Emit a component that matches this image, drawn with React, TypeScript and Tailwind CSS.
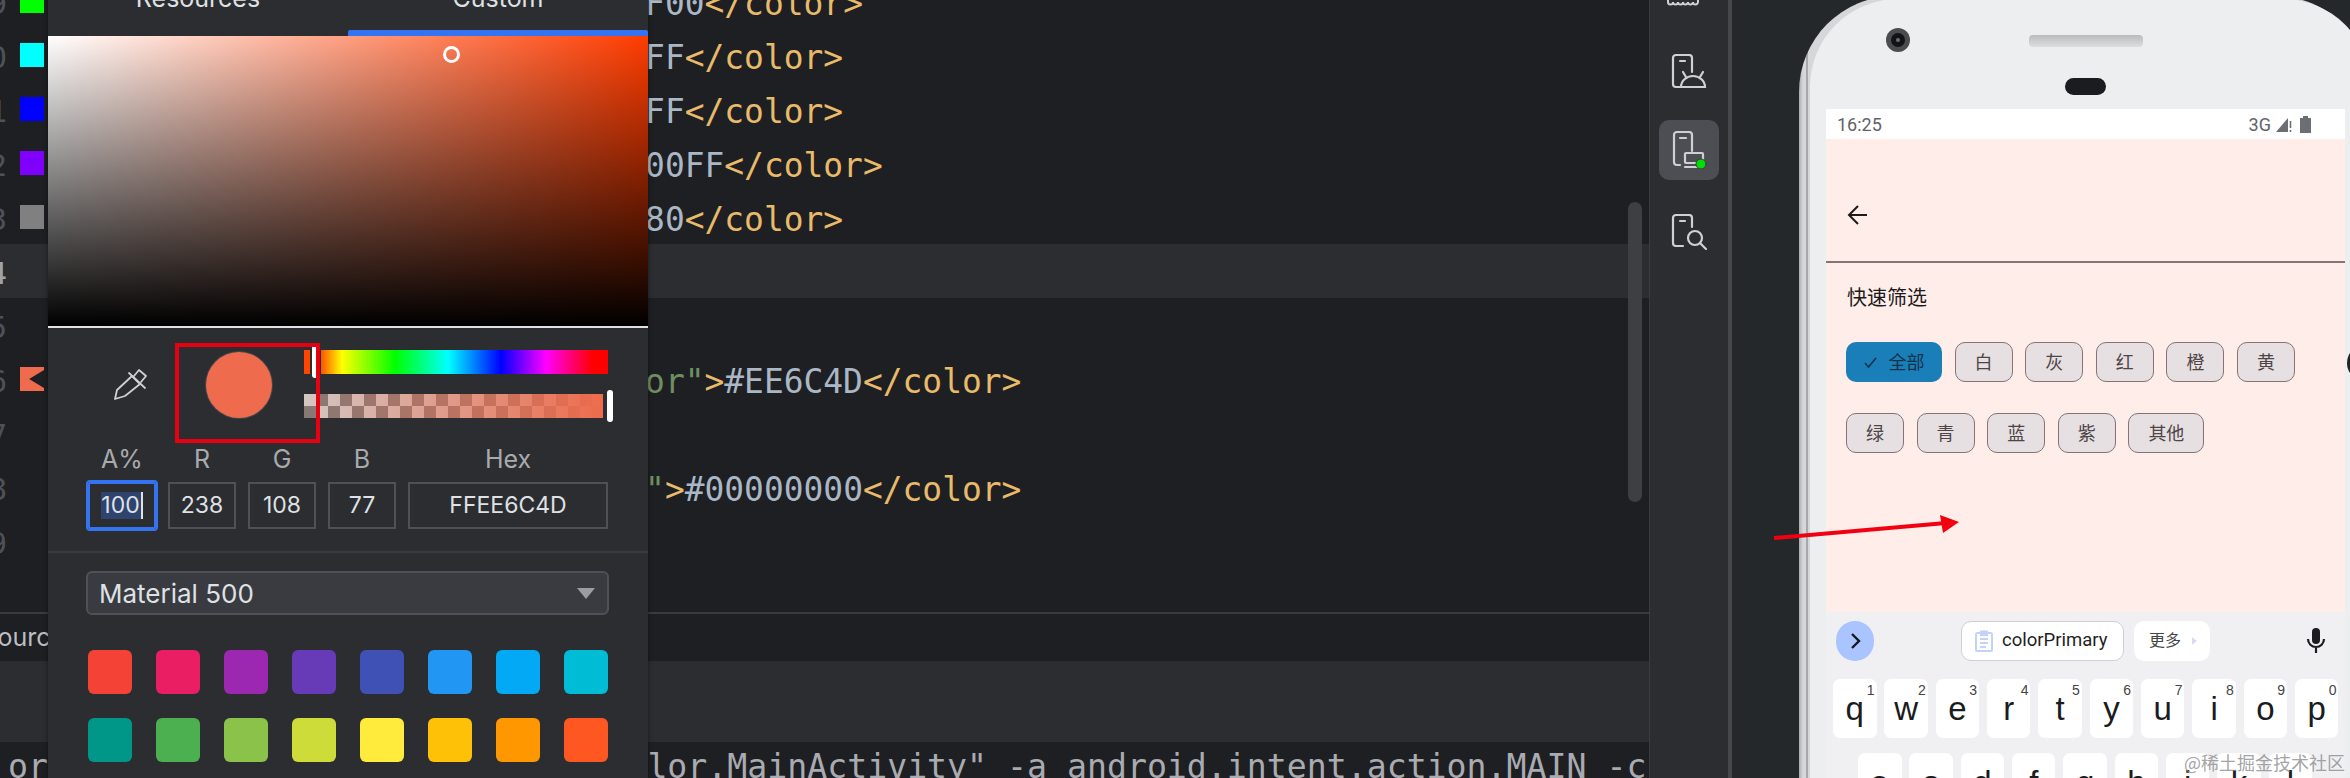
const codeLines = [
  { num: "9", swatch: "bg-[#00ff00]", name: "green", value: "#FF00FF00" },
  { num: "0", swatch: "bg-[#00ffff]", name: "cyan", value: "#FF00FFFF" },
  { num: "1", swatch: "bg-[#0000ff]", name: "blue", value: "#FF0000FF" },
  { num: "2", swatch: "bg-[#8000ff]", name: "purple", value: "#FF8000FF" },
  { num: "3", swatch: "bg-[#808080]", name: "gray", value: "#FF808080" },
  { num: "4", current: true },
  { num: "5" },
  { num: "6", swatch: "bg-[#ee6c4d] [clip-path:polygon(0_0,100%_0,100%_12%,38%_50%,100%_88%,100%_100%,0_100%)]", name: "app_theme_color", value: "#EE6C4D" },
  { num: "7" },
  { num: "8", name: "transparentBg", value: "#00000000" },
  { num: "9" },
];

const materialColors = [
  "bg-[#f44336]", "bg-[#e91e63]", "bg-[#9c27b0]", "bg-[#673ab7]", "bg-[#3f51b5]", "bg-[#2196f3]", "bg-[#03a9f4]", "bg-[#00bcd4]",
  "bg-[#009688]", "bg-[#4caf50]", "bg-[#8bc34a]", "bg-[#cddc39]", "bg-[#ffeb3b]", "bg-[#ffc107]", "bg-[#ff9800]", "bg-[#ff5722]",
];

const chips = ["白", "灰", "红", "橙", "黄", "绿", "青", "蓝", "紫"];
const topKeys = [["q", "1"], ["w", "2"], ["e", "3"], ["r", "4"], ["t", "5"], ["y", "6"], ["u", "7"], ["i", "8"], ["o", "9"], ["p", "0"]];
const homeKeys = ["a", "s", "d", "f", "g", "h", "j", "k", "l"];

function Editor() {
  return (
    <div className="w-[1649px] shrink-0 flex flex-col bg-[#1e1f22] font-['DejaVu_Sans_Mono',monospace] text-[32.9px] overflow-hidden">
      <div className="h-[612px] overflow-hidden">
        <div className="-mt-[26px]">
          {codeLines.map((line, i) => (
            <div key={i} className={`flex h-[54px] items-center whitespace-pre ${line.current ? "bg-[#2b2d30]" : ""}`}>
              <div className="w-[46px] shrink-0 flex items-center">
                <span className={`w-[7px] pt-[4px] flex justify-end text-[30px] ${line.current ? "text-[#a1a3ab]" : "text-[#4e5157]"}`}>{line.num}</span>
                {line.swatch && <span className={`ml-[13px] w-[24px] h-[24px] ${line.swatch}`} />}
              </div>
              {line.name && (
                <span className="ml-[5px] pt-[6px] text-[#e8ba6a]">
                  {'    <color '}
                  <span className="text-[#bcbec4]">name=</span>
                  <span className="text-[#6f8f62]">"{line.name}"</span>
                  {">"}
                  <span className="text-[#a9b7c6]">{line.value}</span>
                  {"</color>"}
                </span>
              )}
            </div>
          ))}
        </div>
      </div>
      <div className="h-[2px] bg-[#393b40]" />
      <div className="h-[47px] flex items-center overflow-hidden font-['Inter',sans-serif] text-[25px] text-[#bcbec4]">
        <span className="-ml-[46px]">Resources</span>
      </div>
      <div className="h-[81px] bg-[#2b2d30]" />
      <div className="h-[36px] pl-[8px] text-[33.2px] text-[#a9abb1] whitespace-pre overflow-hidden leading-[50px]">
        {'or/com.example.android.themes.color.MainActivity" -a android.intent.action.MAIN -c android.intent.category.LAUNCHER'}
      </div>
    </div>
  );
}

function ColorPopup() {
  return (
    <div className="absolute left-[48px] top-0 bottom-0 w-[600px] bg-[#2b2d30] shadow-[0_0_4px_rgba(0,0,0,0.5)] font-['Inter',sans-serif]">
      <div className="flex h-[36px] text-[25px] leading-6 text-[#dfe1e5]">
        <div className="w-[300px] text-center">
          <div className="-mt-[14px]">Resources</div>
        </div>
        <div className="w-[300px] flex flex-col justify-between text-center">
          <div className="-mt-[14px]">Custom</div>
          <div className="h-[6px] rounded-t-[2px] bg-[#3574f0]" />
        </div>
      </div>

      <div className="relative h-[290px] bg-[linear-gradient(to_top,#000,transparent),linear-gradient(to_right,#fff,#ff3c00)]">
        <div className="absolute left-[395px] top-[10px] w-[17px] h-[17px] rounded-full border-[3px] border-white" />
      </div>
      <div className="h-[2px] bg-[#dfe1e5]" />

      <div className="relative flex pt-[22px]">
        <svg className="ml-[65px] mt-[18px] shrink-0" width="36" height="33" viewBox="0 0 36 33" fill="none" stroke="#ced0d6" strokeWidth="1.8" strokeLinejoin="round" strokeLinecap="round">
          <path d="M2 31 L4 22 L19 8 L27 16 L12 28 Z" />
          <path d="M16 5 L32 20" />
          <path d="M21 8 L26 2 L33 8 L28 14" />
        </svg>
        <div className="ml-[57px] mt-[2px] w-[66px] h-[66px] shrink-0 rounded-full bg-[#ee6c4d] [box-shadow:0_0_0_1px_#45474b]" />
        <div className="ml-[32px] w-[304px] flex flex-col gap-[20px]">
          <div className="relative h-[24px] bg-[linear-gradient(90deg,#ff4500_0%,#ff4500_5%,#ffff00_12.5%,#00ff00_30%,#00ffff_47.4%,#0000ff_64.8%,#ff00ff_79.6%,#ff0000_95%)]">
            <div className="absolute left-[6px] -top-[5px] w-[11px] h-[34px] bg-[#2b2d30]" />
            <div className="absolute left-[8px] -top-[5px] w-[6px] h-[33px] rounded-full bg-white" />
          </div>
          <div className="relative h-[24px] w-[299px] bg-[linear-gradient(90deg,rgba(238,108,77,0.1),#ee6c4d),repeating-conic-gradient(#7a7a7a_0_25%,#d0d0d0_0_50%)] [background-size:100%_100%,24px_24px]">
            <div className="absolute left-[303px] -top-[4px] w-[6px] h-[32px] rounded-full bg-white" />
          </div>
        </div>
        <div className="absolute left-[127px] top-[15px] w-[145px] h-[100px] border-4 border-[#e60012]" />
      </div>

      <div className="mt-[29px] pl-[40px] flex gap-[12px] text-[25px] leading-6 text-[#a8aaae] text-center">
        <div className="w-[68px]">A%</div>
        <div className="w-[68px]">R</div>
        <div className="w-[68px]">G</div>
        <div className="w-[68px]">B</div>
        <div className="w-[200px]">Hex</div>
      </div>

      <div className="mt-[11px] pl-[40px] flex gap-[12px] text-[23px] text-[#dfe1e5] text-center">
        <div className="w-[68px] h-[47px] flex items-center justify-center border-2 border-[#3574f0] outline-2 outline-[#3574f0] rounded-[2px]">
          <span className="bg-[#2e436e] border-r-2 border-[#dfe1e5] leading-[27px] pr-[1px]">100</span>
        </div>
        <div className="w-[68px] h-[47px] flex items-center justify-center border-2 border-[#4e5157]">238</div>
        <div className="w-[68px] h-[47px] flex items-center justify-center border-2 border-[#4e5157]">108</div>
        <div className="w-[68px] h-[47px] flex items-center justify-center border-2 border-[#4e5157]">77</div>
        <div className="w-[200px] h-[47px] flex items-center justify-center border-2 border-[#4e5157]">FFEE6C4D</div>
      </div>

      <div className="mt-[22px] h-[2px] bg-[#393b40]" />

      <div className="mt-[18px] ml-[38px] w-[523px] h-[44px] px-[11px] flex items-center justify-between rounded-[6px] border-2 border-[#4e5157] bg-[#393b40] text-[26px] text-[#dfe1e5]">
        <span>Material 500</span>
        <svg className="mr-[1px]" width="18" height="11" viewBox="0 0 18 11">
          <path d="M0 0 H18 L9 11 Z" fill="#9a9da1" />
        </svg>
      </div>

      <div className="mt-[35px] ml-[40px] grid grid-cols-[repeat(8,44px)] gap-[24px]">
        {materialColors.map((c) => (
          <div key={c} className={`h-[44px] rounded-[6px] ${c}`} />
        ))}
      </div>
    </div>
  );
}

function ToolStripe() {
  return (
    <div className="w-[79px] shrink-0 flex flex-col items-center bg-[#2b2d30] border-l border-[#393b40]">
      <svg className="mt-0 -ml-[12px]" width="32" height="6" viewBox="0 0 32 6" fill="none" stroke="#ced0d6" strokeWidth="2">
        <path d="M1 0 V2 a2.5 2.5 0 0 0 5 0 a2.5 2.5 0 0 0 5 0 a2.5 2.5 0 0 0 5 0 a2.5 2.5 0 0 0 5 0 a2.5 2.5 0 0 0 5 0 a2.5 2.5 0 0 0 5 0 V0" />
      </svg>
      <svg className="mt-[48px]" width="36" height="36" viewBox="0 0 36 36" fill="none" stroke="#ced0d6" strokeWidth="2.2" strokeLinecap="round">
        <path d="M9 33 H5 a3 3 0 0 1 -3 -3 V4 a3 3 0 0 1 3 -3 H18 a3 3 0 0 1 3 3 V18" />
        <path d="M9 7 H14" />
        <path d="M10 33 a12 11 0 0 1 24 0 Z" />
        <path d="M15 23 L12 18 M29 23 L32 18" />
      </svg>
      <div className="mt-[30px] w-[60px] h-[60px] rounded-[10px] bg-[#4c4e53] flex items-center justify-center">
        <svg width="36" height="38" viewBox="0 0 36 38" fill="none" stroke="#ced0d6" strokeWidth="2.2" strokeLinecap="round">
          <path d="M9 34 H6 a3 3 0 0 1 -3 -3 V4 a3 3 0 0 1 3 -3 H18 a3 3 0 0 1 3 3 V20" />
          <path d="M9 7 H15" />
          <rect x="14" y="22" width="18" height="10" rx="1" />
          <path d="M14 36 H27" />
          <circle cx="30" cy="33" r="5" fill="#00e000" stroke="#3a3c40" strokeWidth="1" />
        </svg>
      </div>
      <svg className="mt-[34px]" width="36" height="36" viewBox="0 0 36 36" fill="none" stroke="#ced0d6" strokeWidth="2.2" strokeLinecap="round">
        <path d="M12 32 H5 a3 3 0 0 1 -3 -3 V4 a3 3 0 0 1 3 -3 H18 a3 3 0 0 1 3 3 V13" />
        <path d="M9 7 H14" />
        <circle cx="24" cy="24" r="7" />
        <path d="M29 29 L35 35" />
      </svg>
    </div>
  );
}

function Chip({ label, wide }: { label: string; wide?: boolean }) {
  return (
    <div className={`${wide ? "w-[76px]" : "w-[58px]"} h-[40px] flex items-center justify-center rounded-[10px] border-[1.5px] border-[#857375] bg-[#e6e0e2] text-[18px] text-[#4f4547]`}>
      {label}
    </div>
  );
}

function Phone() {
  return (
    <div className="-mt-[4px] w-[572px] shrink-0 pl-[11px] pt-[3px] rounded-t-[96px] bg-[linear-gradient(90deg,#a9abae_0,#d6d7d9_4px,#d6d7d9_7px,#77797c_8px,#d6d7d9_9px,#d0d1d3_100%)] font-['Roboto','Noto_Sans_CJK_SC',sans-serif]">
      <div className="h-[800px] pl-[16px] rounded-t-[88px] bg-[#eceef0]">
        <div className="pt-[29px] flex items-start">
          <div className="ml-[60px] w-[24px] h-[24px] rounded-full bg-[#4a4c4e] flex items-center justify-center">
            <div className="w-[14px] h-[14px] rounded-full bg-[#111316] flex items-center justify-center">
              <div className="w-[4px] h-[4px] rounded-full bg-[#6c6e60]" />
            </div>
          </div>
          <div className="ml-[119px] mt-[7px] w-[114px] h-[12px] rounded-[4px] bg-[linear-gradient(180deg,#b9bbbd,#dcdee0)]" />
        </div>
        <div className="mt-[26px] ml-[239px] w-[41px] h-[17px] rounded-full bg-[#1a1c20]" />

        <div className="mt-[14px] w-[519px]">
          <div className="h-[30px] flex items-center justify-between bg-white pl-[11px] pr-[34px] text-[18px] text-[#5f6368]">
            <span>16:25</span>
            <div className="flex items-center">
              <span className="text-[18px]">3G</span>
              <svg className="ml-[5px]" width="17" height="16" viewBox="0 0 17 16">
                <path d="M0 16 L12 2 V16 Z" fill="#6b6e72" />
                <path d="M14.5 5 V12 M14.5 14 V16" stroke="#6b6e72" strokeWidth="1.6" />
              </svg>
              <svg className="ml-[7px]" width="11" height="17" viewBox="0 0 11 17">
                <path d="M3 0 H8 V2 H11 V17 H0 V2 H3 Z" fill="#6b6e72" />
              </svg>
            </div>
          </div>

          <div className="h-[473px] bg-[#ffede9] flex flex-col">
            <svg className="mt-[66px] ml-[21px]" width="20" height="20" viewBox="0 0 20 20" fill="none" stroke="#201a1b" strokeWidth="2">
              <path d="M20 10 H2 M11 1 L2 10 L11 19" />
            </svg>
            <div className="mt-[36px] h-[2px] bg-[#857375]" />
            <div className="mt-[21px] ml-[21px] h-[28px] leading-[28px] text-[20px] text-[#201a1b]">快速筛选</div>
            <div className="mt-[30px] ml-[20px] flex flex-wrap gap-x-[12.6px] gap-y-[31px] w-[470px]">
              <div className="w-[96px] h-[40px] flex items-center justify-center gap-[12px] rounded-[10px] bg-[#1a7fb8] text-[18px] text-[#12324a]">
                <svg width="13" height="11" viewBox="0 0 13 11" fill="none" stroke="#12324a" strokeWidth="1.6">
                  <path d="M1 6 L4.5 10 L12 1" />
                </svg>
                <span>全部</span>
              </div>
              {chips.map((c) => (
                <Chip key={c} label={c} />
              ))}
              <Chip label="其他" wide />
            </div>
          </div>

          <div className="h-[166px] bg-[#f0f0f3] overflow-hidden">
            <div className="mt-[9px] flex items-center h-[40px]">
              <div className="ml-[10px] w-[38px] h-[40px] rounded-full bg-[#aac4ff] flex items-center justify-center">
                <svg width="11" height="16" viewBox="0 0 11 16" fill="none" stroke="#14181f" strokeWidth="2.4">
                  <path d="M2 1 L9 8 L2 15" />
                </svg>
              </div>
              <div className="ml-[87px] w-[163px] h-[40px] flex items-center rounded-[10px] border border-[#d0d0d4] bg-white text-[18.5px] text-[#1f1f1f]">
                <svg className="ml-[13px]" width="18" height="22" viewBox="0 0 18 22" fill="none" stroke="#c4d2fa" strokeWidth="2">
                  <rect x="1" y="3" width="16" height="18" rx="1.5" />
                  <path d="M6 1.5 H12 V5 H6 Z" fill="#c4d2fa" />
                  <path d="M5 9 H13 M5 13 H13 M5 17 H11" />
                </svg>
                <span className="ml-[9px]">colorPrimary</span>
              </div>
              <div className="ml-[10px] w-[76px] h-[40px] flex items-center rounded-[10px] bg-white text-[16px] text-[#444]">
                <span className="ml-[15px]">更多</span>
                <svg className="ml-[11px]" width="5" height="8" viewBox="0 0 5 8">
                  <path d="M0 0 L5 4 L0 8 Z" fill="#d6dcf5" />
                </svg>
              </div>
              <svg className="ml-[96px]" width="20" height="26" viewBox="0 0 20 26" fill="none">
                <rect x="6" y="0" width="8" height="16" rx="4" fill="#1a1c20" />
                <path d="M2 11 a8 8 0 0 0 16 0 M10 19 V25" stroke="#1a1c20" strokeWidth="2.2" />
              </svg>
            </div>

            <div className="mt-[18px] ml-[7px] flex gap-[7.83px] font-['Liberation_Sans',sans-serif] text-[33px] text-[#1a1c20]">
              {topKeys.map(([k, n]) => (
                <div key={k} className="relative w-[43.5px] h-[59px] flex items-center justify-center rounded-[7px] bg-white">
                  <span>{k}</span>
                  <span className="absolute right-[2px] top-[3px] text-[14px] leading-4 text-[#444]">{n}</span>
                </div>
              ))}
            </div>
            <div className="mt-[15px] ml-[32px] flex gap-[7.83px] font-['Liberation_Sans',sans-serif] text-[33px] text-[#1a1c20]">
              {homeKeys.map((k) => (
                <div key={k} className="w-[43.5px] h-[59px] flex items-center justify-center rounded-[7px] bg-white">
                  {k}
                </div>
              ))}
            </div>
          </div>
        </div>
      </div>
    </div>
  );
}

export default function App() {
  return (
    <div className="relative flex w-[2350px] h-[778px] overflow-hidden bg-[#1e1f22]">
      <Editor />
      <ColorPopup />

      {/* scrollbar sits on top of the editor */}
      <div className="absolute left-[1628px] top-[202px] w-[14px] h-[300px] rounded-full bg-[#3d3f43]" />

      <ToolStripe />
      <div className="w-[4px] shrink-0 bg-[#45474b]" />

      <div className="flex-1 flex pl-[67px] bg-[#25282b]">
        <Phone />
      </div>

      {/* annotations on top of the screenshot */}
      <svg className="absolute left-[1770px] top-[510px]" width="195" height="35" viewBox="0 0 195 35" fill="none">
        <path d="M4 28 L176 13" stroke="#f00010" strokeWidth="4" />
        <path d="M189 12 L170 5 L173 23 Z" fill="#f00010" />
      </svg>
      <div className="absolute left-[2347px] top-[345px] w-[36px] h-[36px] rounded-full bg-[#222]" />
      <div className="absolute left-[2184px] top-[750px] text-[18px] leading-6 text-[#8c8c8c]/80 font-['Noto_Sans_CJK_SC',sans-serif] whitespace-nowrap">
        @稀土掘金技术社区
      </div>
    </div>
  );
}
